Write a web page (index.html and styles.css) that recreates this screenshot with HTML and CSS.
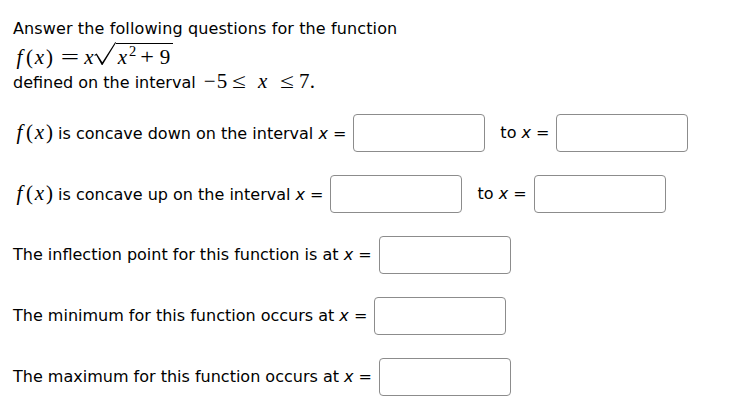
FILE: index.html
```html
<!DOCTYPE html>
<html>
<head>
<meta charset="utf-8">
<link rel="stylesheet" href="styles.css">
</head>
<body>
<div class="problem">
  <div class="intro">
    <div class="line l1">Answer the following questions for the function</div>
    <div class="line l2"><span class="math"><i class="a a-f">f</i><span class="a a-p">(</span><i class="a a-x">x</i><span class="a a-p">)</span><span class="a a-eq">=</span><i class="a a-x2">x</i><svg class="radical" width="22" height="23" viewBox="0 0 22 23"><polygon points="0.3,12.9 2.7,11.4 8.3,20.2 21.3,0 22,0.7 8.5,23 7.7,23 2.3,13.3 0.7,13.8" fill="#000"/></svg><span class="radicand"><i class="a a-x">x</i><sup class="a a-sup">2</sup><span class="a a-plus">+</span><span class="a a-nine">9</span></span></span></div>
    <div class="line l3">defined on the interval <span class="math"><span class="a a-minus">−</span><span class="a a-d">5</span><span class="a a-le">≤</span><i class="a a-xl">x</i><span class="a a-le">≤</span><span class="a a-seven">7</span>.</span></div>
  </div>

  <div class="row">
    <span class="label"><span class="math"><i class="a a-f">f</i><span class="a a-p">(</span><i class="a a-x">x</i><span class="a a-p">)</span></span> is concave down on the interval <i class="v">x</i> =</span>
    <input class="ans" type="text">
    <span class="label to">to <i class="v">x</i> =</span>
    <input class="ans" type="text">
  </div>

  <div class="row">
    <span class="label"><span class="math"><i class="a a-f">f</i><span class="a a-p">(</span><i class="a a-x">x</i><span class="a a-p">)</span></span> is concave up on the interval <i class="v">x</i> =</span>
    <input class="ans" type="text">
    <span class="label to">to <i class="v">x</i> =</span>
    <input class="ans" type="text">
  </div>

  <div class="row">
    <span class="label">The inflection point for this function is at <i class="v">x</i> =</span>
    <input class="ans" type="text">
  </div>

  <div class="row">
    <span class="label">The minimum for this function occurs at <i class="v">x</i> =</span>
    <input class="ans" type="text">
  </div>

  <div class="row">
    <span class="label">The maximum for this function occurs at <i class="v">x</i> =</span>
    <input class="ans" type="text">
  </div>
</div>
</body>
</html>
```
FILE: styles.css
```css
html, body {
  margin: 0;
  padding: 0;
  background: #fff;
}

body {
  font-family: "DejaVu Sans", sans-serif;
  font-size: 16px;
  color: #000;
}

.problem {
  padding: 18px 0 0 13px;
}

.line {
  line-height: 22px;
  white-space: nowrap;
}

.l1 {
  letter-spacing: 0.12px;
}

.l2 {
  margin-top: 2px;
}

/* ---- math (TeX-like) ---- */
.math {
  font-family: "Liberation Serif", "DejaVu Serif", serif;
  font-size: 21px;
  line-height: 22px;
  letter-spacing: 0;
}

.math i {
  font-style: italic;
}

/* each math atom is a fixed-width, centred box */
.a {
  display: inline-block;
  text-align: center;
}

.a-f { width: 13px; }
.a-p { width: 7px; }
.a-x { width: 13px; }

.a-eq {
  width: 28px;
  margin-left: 3px;
  transform: scaleX(1.55);
}

.a-x2 { width: 10px; }

.radical {
  vertical-align: -1.5px;
}

.radicand {
  display: inline-block;
  line-height: 18px;
  padding: 4px 1px 0 0;
  border-top: 1.2px solid #000;
}

.a-sup {
  width: 7px;
  font-size: 14.5px;
  line-height: 0;
  vertical-align: 7.5px;
}

.a-plus {
  width: 22px;
  transform: scaleX(1.15);
}

.a-nine { width: 14px; }

.a-minus {
  width: 14px;
  margin-left: 2px;
}

.a-d { width: 10px; }

.a-le {
  width: 24px;
  transform: scaleX(1.2);
}

.a-xl { width: 24px; }

.a-seven { width: 11px; }

/* ---- answer rows ---- */
.row {
  display: flex;
  align-items: center;
  height: 38px;
  margin-top: 23px;
  white-space: nowrap;
}

.intro + .row {
  margin-top: 20px;
}

.label {
  line-height: 22px;
}

.v {
  font-style: italic;
}

.ans {
  box-sizing: border-box;
  width: 132px;
  height: 38px;
  margin: 0 0 0 7px;
  padding: 0 6px;
  border: 1px solid #8c8c8c;
  border-radius: 4px;
  background: #fff;
  font: inherit;
}

.to {
  margin-left: 15px;
}
```
